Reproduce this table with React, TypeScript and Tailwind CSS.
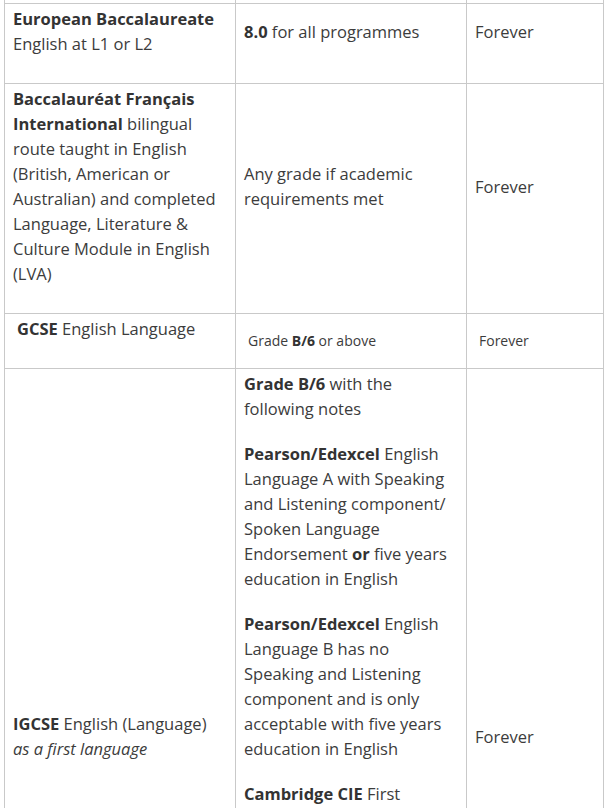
const cell = "border border-[#c9c9c9] align-middle px-2 pt-[2px] pb-[7px]";

function P({ children }: { children: React.ReactNode }) {
  return <p className="mb-5">{children}</p>;
}

function B({ children }: { children: React.ReactNode }) {
  return <strong className="font-bold text-[#333]">{children}</strong>;
}

export default function App() {
  return (
    <div className="bg-white min-h-screen pl-1 overflow-hidden">
      <table
        className="table-fixed border-collapse w-[600px] text-[16.5px] leading-[25px] text-[#3c3c3c]"
        style={{ fontFamily: '"Open Sans", "Noto Sans", sans-serif' }}
      >
        <colgroup>
          <col className="w-[231px]" />
          <col className="w-[231px]" />
          <col />
        </colgroup>
        <tbody>
          {/* tail of the row above */}
          <tr>
            <td className="border-x border-b border-[#c9c9c9] p-0"><div className="h-[3px]" /></td>
            <td className="border-x border-b border-[#c9c9c9] p-0"><div className="h-[3px]" /></td>
            <td className="border-x border-b border-[#c9c9c9] p-0"><div className="h-[3px]" /></td>
          </tr>

          <tr>
            <td className={cell}>
              <P>
                <B>European Baccalaureate</B> English at L1 or L2
              </P>
            </td>
            <td className={cell}>
              <P>
                <B>8.0</B> for all programmes
              </P>
            </td>
            <td className={cell}>
              <P>Forever</P>
            </td>
          </tr>

          <tr>
            <td className={cell}>
              <P>
                <B>Baccalauréat Français International</B> bilingual route taught in English (British, American or
                Australian) and completed Language, Literature &amp; Culture Module in English (LVA)
              </P>
            </td>
            <td className={cell}>
              <P>Any grade if academic requirements met</P>
            </td>
            <td className={cell}>
              <P>Forever</P>
            </td>
          </tr>

          <tr>
            <td className={cell + " pl-3"}>
              <P>
                <B>GCSE</B> English Language
              </P>
            </td>
            <td className="border border-[#c9c9c9] align-middle pl-3 pr-2 py-[2px] text-[14px] leading-[20px]">
              Grade <B>B/6</B> or above
            </td>
            <td className="border border-[#c9c9c9] align-middle pl-3 pr-2 py-[2px] text-[14px] leading-[20px]">
              Forever
            </td>
          </tr>

          <tr className="h-[760px]">
            <td className={cell}>
              <P>
                <B>IGCSE</B> English (Language) <em className="italic">as a first language</em>
              </P>
            </td>
            <td className={cell + " align-top"}>
              <P>
                <B>Grade B/6</B> with the following notes
              </P>
              <P>
                <B>Pearson/Edexcel</B> English Language A with Speaking and Listening component/ Spoken Language
                Endorsement <B>or</B> five years education in English
              </P>
              <P>
                <B>Pearson/Edexcel</B> English Language B has no Speaking and Listening component and is only
                acceptable with five years education in English
              </P>
              <P>
                <B>Cambridge CIE</B> First Language English with Speaking and Listening component
              </P>
            </td>
            <td className={cell}>
              <P>Forever</P>
            </td>
          </tr>
        </tbody>
      </table>
    </div>
  );
}
